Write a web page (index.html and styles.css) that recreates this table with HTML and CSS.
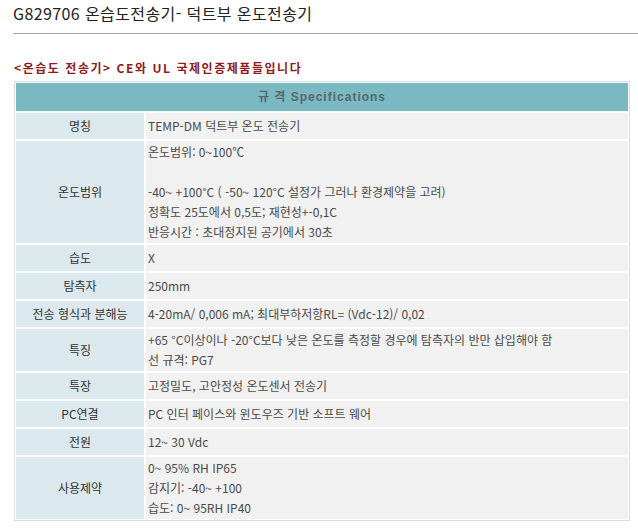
FILE: index.html
```html
<!DOCTYPE html>
<html lang="ko">
<head>
<meta charset="utf-8">
<title>G829706 온습도전송기</title>
<link rel="stylesheet" href="styles.css">
</head>
<body>
<div class="page">
  <h1 class="title">G829706 온습도전송기- 덕트부 온도전송기</h1>
  <p class="subtitle">&lt;온습도 전송기&gt; CE와 UL 국제인증제품들입니다</p>
  <div class="spec">
    <div class="spec-head">규 격 Specifications</div>

    <div class="label">명칭</div>
    <div class="value">TEMP-DM 덕트부 온도 전송기</div>

    <div class="label">온도범위</div>
    <div class="value multi">온도범위: 0~100℃<br><br>-40~ +100°C ( -50~ 120°C 설정가 그러나 환경제약을 고려)<br>정확도 25도에서 0,5도; 재현성+-0,1C<br>반응시간 : 초대정지된 공기에서 30초</div>

    <div class="label">습도</div>
    <div class="value">X</div>

    <div class="label">탐측자</div>
    <div class="value">250mm</div>

    <div class="label">전송 형식과 분해능</div>
    <div class="value">4-20mA/ 0,006 mA; 최대부하저항RL= (Vdc-12)/ 0,02</div>

    <div class="label">특징</div>
    <div class="value multi">+65 °C이상이나 -20°C보다 낮은 온도를 측정할 경우에 탐측자의 반만 삽입해야 함<br>선 규격: PG7</div>

    <div class="label">특장</div>
    <div class="value">고정밀도, 고안정성 온도센서 전송기</div>

    <div class="label">PC연결</div>
    <div class="value">PC 인터 페이스와 윈도우즈 기반 소프트 웨어</div>

    <div class="label">전원</div>
    <div class="value">12~ 30 Vdc</div>

    <div class="label">사용제약</div>
    <div class="value multi">0~ 95% RH IP65<br>감지기: -40~ +100<br>습도: 0~ 95RH IP40</div>
  </div>
</div>
</body>
</html>
```

FILE: styles.css
```css
html, body {
  margin: 0;
  padding: 0;
  background: #ffffff;
  overflow: hidden;
}

body {
  font-family: "Noto Sans CJK KR", "Liberation Sans", sans-serif;
  color: #333333;
}

.page {
  padding-left: 13px;
}

.title {
  margin: 0;
  padding: 2px 0 9px 0;
  font-size: 16px;
  line-height: 22px;
  font-weight: normal;
  letter-spacing: 0.4px;
  color: #222222;
  border-bottom: 1px solid #a3a3a3;
}

.subtitle {
  margin: 26px 0 5px 1px;
  font-size: 12px;
  line-height: 16px;
  font-weight: bold;
  letter-spacing: 1.55px;
  color: #8e1b1b;
}

.spec {
  box-sizing: border-box;
  width: 616px;
  margin-left: 1px;
  border: 1px solid #dddddd;
  padding: 1px;
  background: #ffffff;
  display: grid;
  grid-template-columns: 128px 1fr;
  gap: 2px;
  font-size: 12px;
  line-height: 20px;
}

.spec-head {
  grid-column: 1 / -1;
  height: 28px;
  background: #7ab9c2;
  color: #56686b;
  font-weight: bold;
  letter-spacing: 1px;
  display: flex;
  align-items: center;
  justify-content: center;
  font-family: "Liberation Sans", "Noto Sans CJK KR", sans-serif;
}

.label {
  background: #dbe8ee;
  color: #333333;
  display: flex;
  align-items: center;
  justify-content: center;
  text-align: center;
}

.value {
  background: #f1f1f1;
  color: #4a4a4a;
  padding: 3px 2px;
}

.value.multi {
  padding: 1px 2px;
}
```
